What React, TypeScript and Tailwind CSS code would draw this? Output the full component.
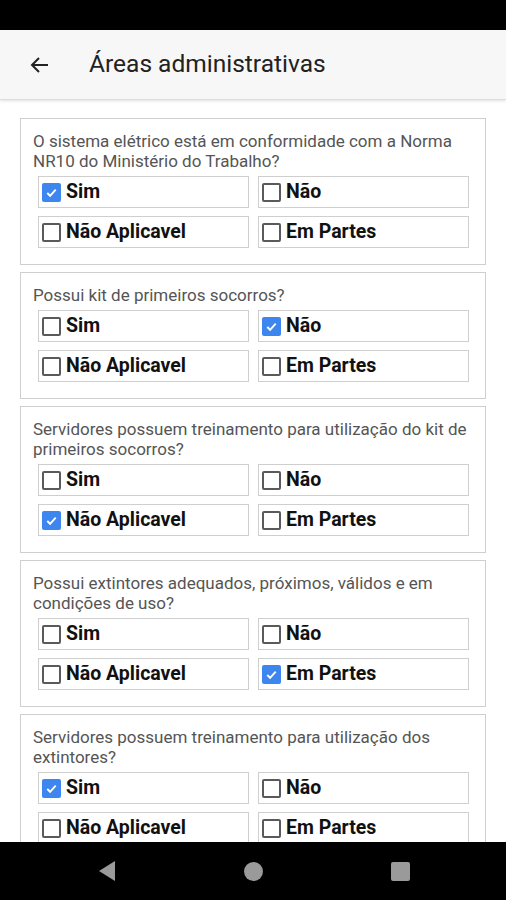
import React from 'react';

type Option = 'Sim' | 'Não' | 'Não Aplicavel' | 'Em Partes';

const options: Option[] = ['Sim', 'Não', 'Não Aplicavel', 'Em Partes'];

const questions: { text: string; checked: Option }[] = [
  { text: 'O sistema elétrico está em conformidade com a Norma NR10 do Ministério do Trabalho?', checked: 'Sim' },
  { text: 'Possui kit de primeiros socorros?', checked: 'Não' },
  { text: 'Servidores possuem treinamento para utilização do kit de primeiros socorros?', checked: 'Não Aplicavel' },
  { text: 'Possui extintores adequados, próximos, válidos e em condições de uso?', checked: 'Em Partes' },
  { text: 'Servidores possuem treinamento para utilização dos extintores?', checked: 'Sim' },
];

function Checkbox({ checked }: { checked: boolean }) {
  if (checked) {
    return (
      <span className="flex h-[19px] w-[19px] shrink-0 items-center justify-center rounded-[2px] bg-[#3d86f0]">
        <svg viewBox="0 0 16 16" className="h-[15px] w-[15px]" fill="none" stroke="white" strokeWidth={2}>
          <path d="M3.5 8.5l3 3 6-6.5" />
        </svg>
      </span>
    );
  }
  return <span className="h-[19px] w-[19px] shrink-0 rounded-[2px] border-2 border-[#5a5a5a]" />;
}

function QuestionCard({ text, checked }: { text: string; checked: Option }) {
  return (
    <div className="border border-[#cfcfcf] bg-white pl-[12px] pr-[16px] pt-[12px] pb-[16px]">
      <p className="text-[17px] leading-[20px] text-[#555]">{text}</p>
      <div className="mt-[5px] grid grid-cols-2 gap-x-[9px] gap-y-[8px] pl-[5px]">
        {options.map((opt) => (
          <div key={opt} className="flex h-[32px] items-center gap-[5px] border border-[#cfcfcf] pl-[3px]">
            <Checkbox checked={opt === checked} />
            <span className="text-[19.5px] font-bold text-[#111]">{opt}</span>
          </div>
        ))}
      </div>
    </div>
  );
}

export default function App() {
  return (
    <div className="flex h-[900px] w-[506px] flex-col overflow-hidden bg-white" style={{ fontFamily: 'Roboto, "Noto Sans", sans-serif' }}>
      <div className="h-[30px] shrink-0 bg-black" />
      <header className="flex h-[70px] shrink-0 items-center border-b border-[#ddd] bg-[#f7f7f7] shadow-[0_1px_3px_rgba(0,0,0,0.12)]">
        <svg viewBox="0 0 24 24" className="ml-[28px] h-[24px] w-[24px]" fill="none" stroke="#222" strokeWidth={2}>
          <path d="M20 12H5M11 5l-7 7 7 7" />
        </svg>
        <h1 className="ml-[37px] text-[24.5px] text-[#222]">Áreas administrativas</h1>
      </header>
      <main className="flex min-h-0 flex-1 flex-col gap-[7px] overflow-hidden px-[20px] pt-[18px]">
        {questions.map((q, i) => (
          <QuestionCard key={i} text={q.text} checked={q.checked} />
        ))}
      </main>
      <nav className="flex h-[58px] shrink-0 items-center justify-center gap-[128px] bg-black pl-[2px]">
        <svg viewBox="0 0 18 22" className="h-[22px] w-[18px]">
          <path d="M17 1v20L1 11z" fill="#9a9a9a" />
        </svg>
        <span className="h-[19px] w-[19px] rounded-full bg-[#9a9a9a]" />
        <span className="h-[19px] w-[19px] rounded-[2px] bg-[#9a9a9a]" />
      </nav>
    </div>
  );
}
